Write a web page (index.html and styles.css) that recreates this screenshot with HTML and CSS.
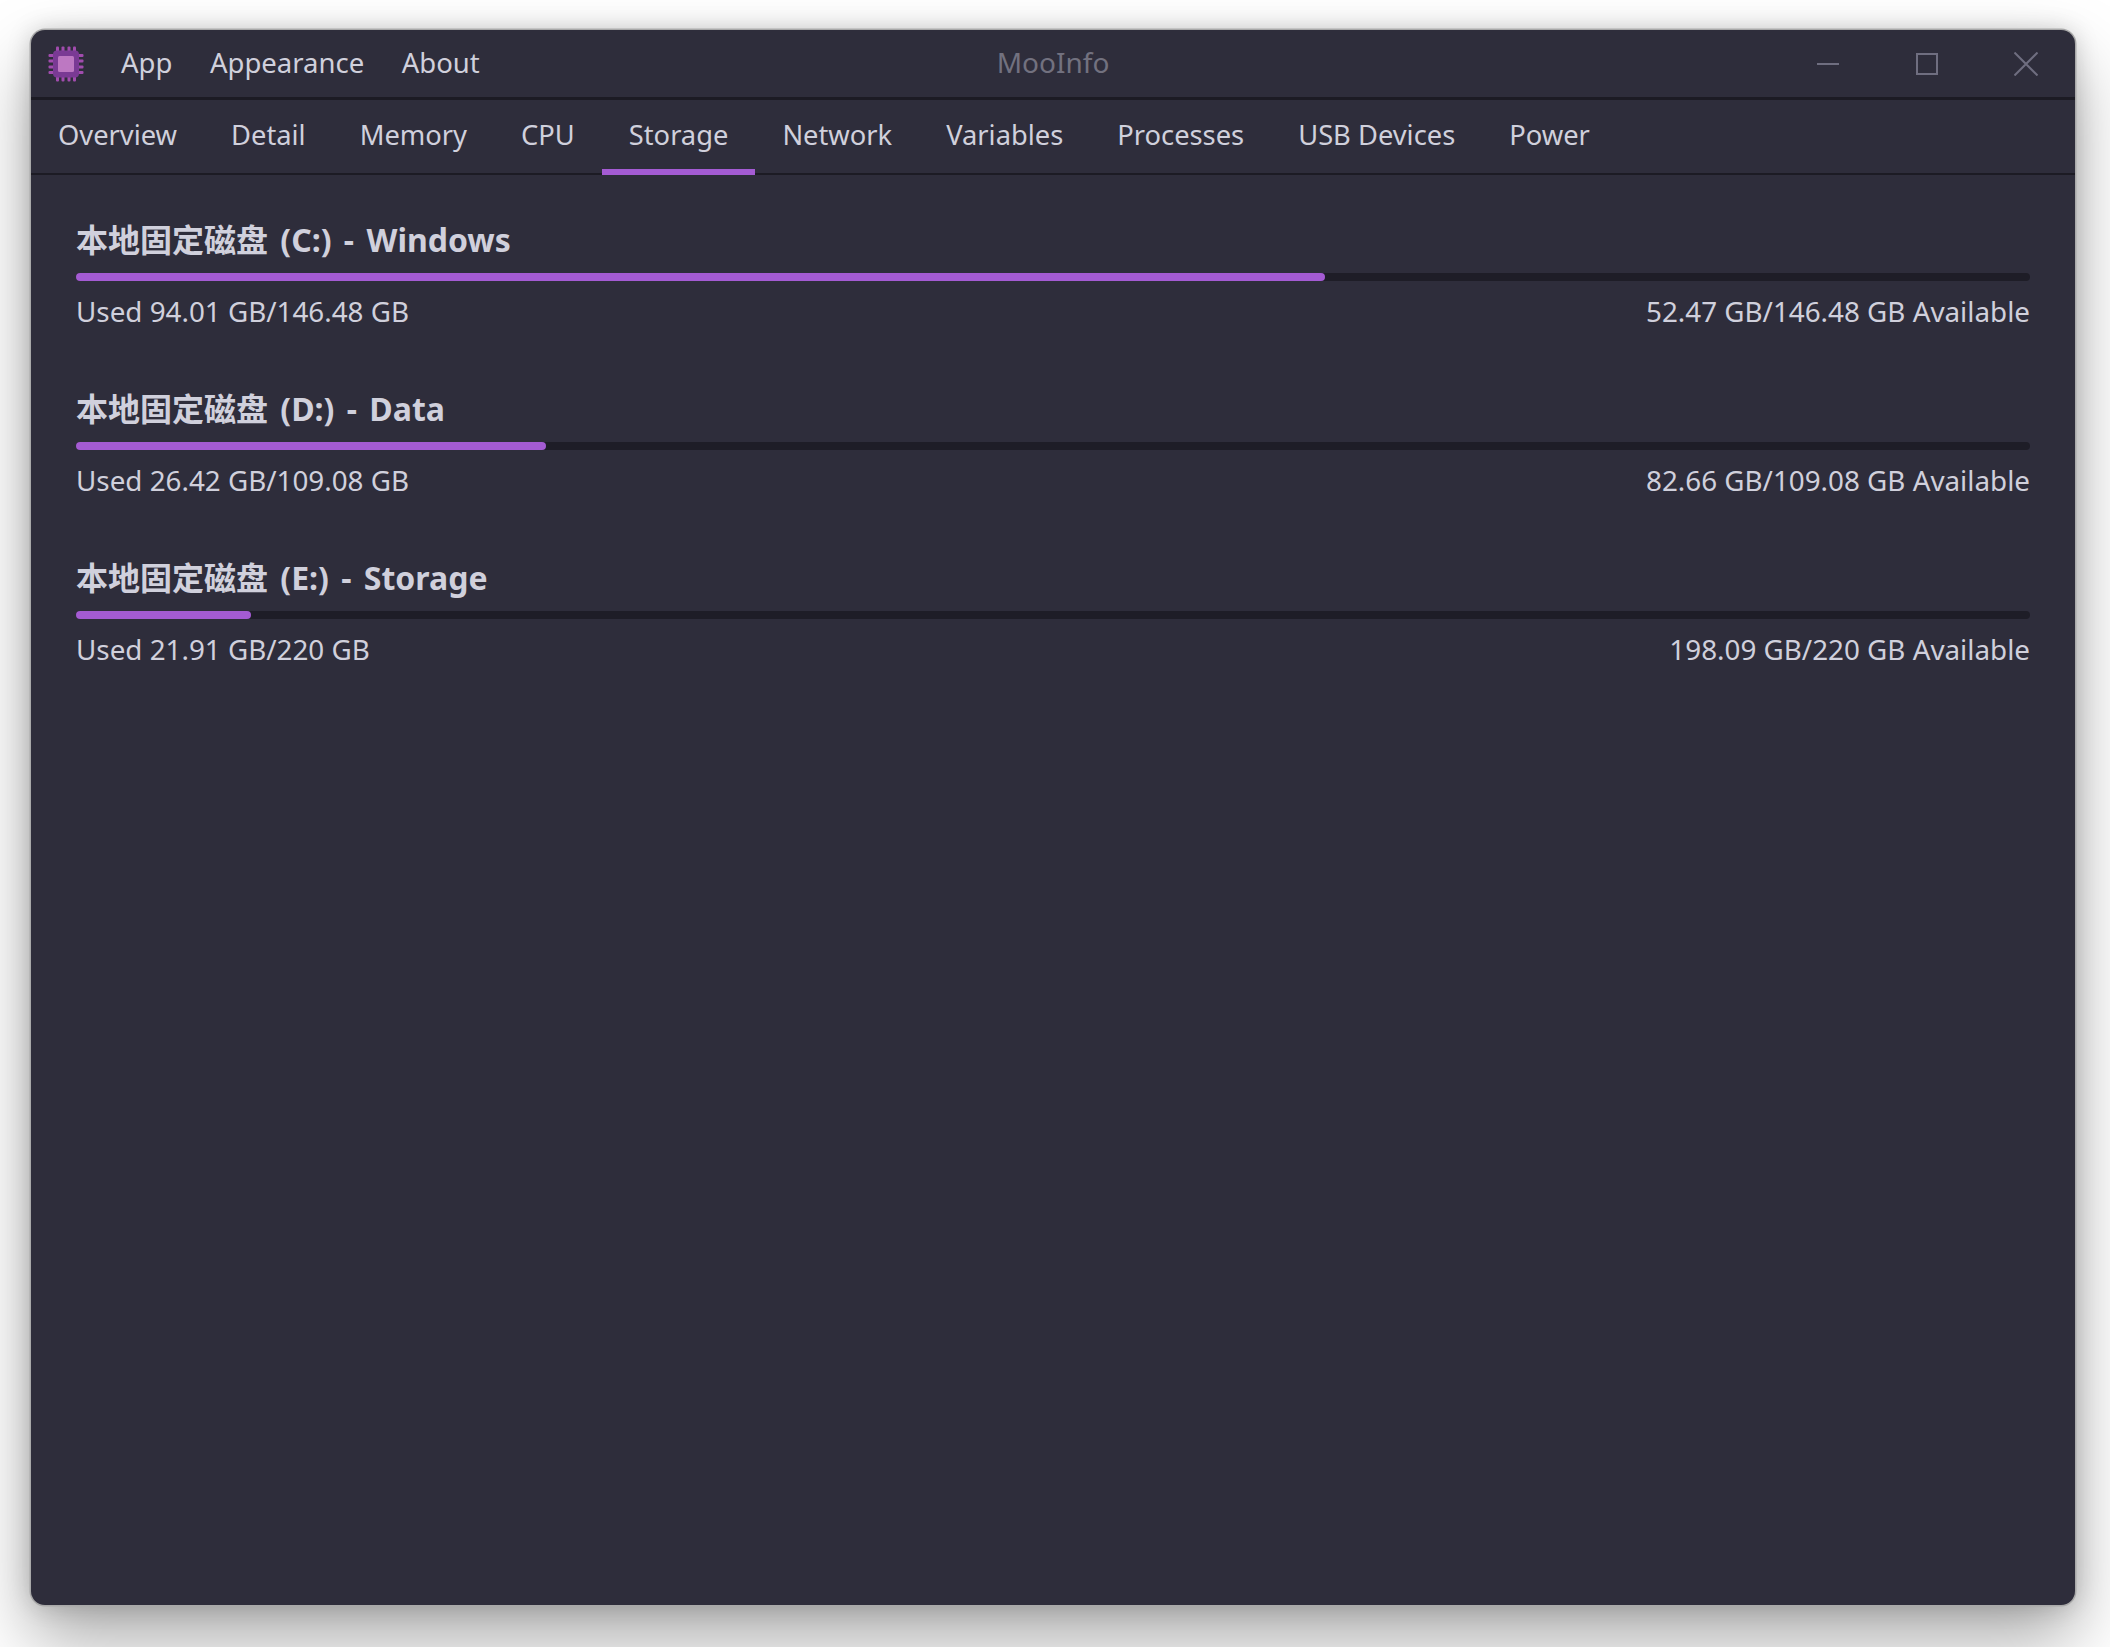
FILE: index.html
```html
<!DOCTYPE html>
<html lang="zh">
<head>
    <meta charset="UTF-8">
    <title>MooInfo</title>
    <link rel="stylesheet" href="styles.css">
</head>
<body>
    <div class="window">
        <div class="titlebar">
            <svg class="app-icon" width="36" height="36" viewBox="0 0 36 36">
                <g fill="#a14cae">
                    <rect x="8" y="0.5" width="3" height="35" rx="1"/>
                    <rect x="13.5" y="0.5" width="3" height="35" rx="1"/>
                    <rect x="19.5" y="0.5" width="3" height="35" rx="1"/>
                    <rect x="25" y="0.5" width="3" height="35" rx="1"/>
                    <rect x="0.5" y="8" width="35" height="3" rx="1"/>
                    <rect x="0.5" y="13.5" width="35" height="3" rx="1"/>
                    <rect x="0.5" y="19.5" width="35" height="3" rx="1"/>
                    <rect x="0.5" y="25" width="35" height="3" rx="1"/>
                </g>
                <rect x="5" y="4.5" width="26" height="27" rx="4" fill="#7a3a94"/>
                <rect x="10" y="10" width="16" height="16" rx="1.5" fill="#bd78c2"/>
            </svg>
            <nav class="menu">
                <span>App</span>
                <span>Appearance</span>
                <span>About</span>
            </nav>
            <div class="app-title">MooInfo</div>
            <div class="win-buttons">
                <svg width="24" height="24" viewBox="0 0 24 24"><path d="M1 12H23" stroke="#6f6e80" stroke-width="2" fill="none"/></svg>
                <svg width="24" height="24" viewBox="0 0 24 24"><rect x="2" y="2" width="20" height="20" stroke="#6f6e80" stroke-width="2" fill="none"/></svg>
                <svg width="24" height="24" viewBox="0 0 24 24"><path d="M0.5 0.5L23.5 23.5M23.5 0.5L0.5 23.5" stroke="#6f6e80" stroke-width="2" fill="none"/></svg>
            </div>
        </div>
        <div class="tabs">
            <div class="tab">Overview</div>
            <div class="tab">Detail</div>
            <div class="tab">Memory</div>
            <div class="tab">CPU</div>
            <div class="tab active">Storage</div>
            <div class="tab">Network</div>
            <div class="tab">Variables</div>
            <div class="tab">Processes</div>
            <div class="tab">USB Devices</div>
            <div class="tab">Power</div>
        </div>
        <div class="content">
            <div class="disk">
                <div class="disk-title">本地固定磁盘 (C:) - Windows</div>
                <div class="bar"><div class="bar-fill" style="width: 63.94%"></div></div>
                <div class="disk-info"><span>Used 94.01 GB/146.48 GB</span><span>52.47 GB/146.48 GB Available</span></div>
            </div>
            <div class="disk">
                <div class="disk-title">本地固定磁盘 (D:) - Data</div>
                <div class="bar"><div class="bar-fill" style="width: 24.05%"></div></div>
                <div class="disk-info"><span>Used 26.42 GB/109.08 GB</span><span>82.66 GB/109.08 GB Available</span></div>
            </div>
            <div class="disk">
                <div class="disk-title">本地固定磁盘 (E:) - Storage</div>
                <div class="bar"><div class="bar-fill" style="width: 8.95%"></div></div>
                <div class="disk-info"><span>Used 21.91 GB/220 GB</span><span>198.09 GB/220 GB Available</span></div>
            </div>
        </div>
    </div>
</body>
</html>
```

FILE: styles.css
```css
html, body {
    margin: 0;
    height: 100%;
}
body {
    background-color: #fff;
    font-family: "Noto Sans", "Noto Sans CJK SC", sans-serif;
    color: #d0d0dc;
    padding: 30px 35px 42px 31px;
    box-sizing: border-box;
    overflow: hidden;
}
.window {
    height: 100%;
    background-color: #2e2d3b;
    border-radius: 14px;
    box-shadow: 0 0 0 1.5px #a9a9a9, 0 0 24px rgba(0, 0, 0, .18), 0 34px 70px rgba(0, 0, 0, .34);
    display: flex;
    flex-direction: column;
}
.titlebar {
    height: 67px;
    flex: none;
    display: flex;
    align-items: center;
    padding-left: 17px;
    border-bottom: 3px solid #1c1b24;
    position: relative;
}
.app-icon {
    flex: none;
}
.menu {
    display: flex;
    gap: 37.5px;
    margin-left: 37px;
    padding-bottom: 3px;
    font-size: 27.5px;
}
.app-title {
    position: absolute;
    left: 0;
    right: 0;
    padding-bottom: 3px;
    text-align: center;
    font-size: 28px;
    color: #72717f;
}
.win-buttons {
    margin-left: auto;
    margin-right: 37px;
    display: flex;
    gap: 75px;
}
.tabs {
    height: 73px;
    flex: none;
    display: flex;
    font-size: 27.3px;
    border-bottom: 2px solid #1c1b24;
}
.tab {
    padding: 0 27px 7px;
    display: flex;
    align-items: center;
    box-sizing: border-box;
    height: 75px;
}
.tab.active {
    box-shadow: inset 0 -6px 0 #a45bd3;
}
.content {
    padding: 38px 45px 0;
}
.disk {
    margin-bottom: 51.5px;
}
.disk-title {
    font-size: 32px;
    font-weight: 700;
    line-height: 54px;
    word-spacing: 4px;
}
.bar {
    height: 8px;
    margin-top: 6px;
    background-color: #1e1d27;
    border-radius: 4px;
}
.bar-fill {
    height: 100%;
    background-color: #a45bd3;
    border-radius: 4px;
}
.disk-info {
    display: flex;
    justify-content: space-between;
    font-size: 27.8px;
    line-height: 40px;
    margin-top: 9.5px;
}
```
